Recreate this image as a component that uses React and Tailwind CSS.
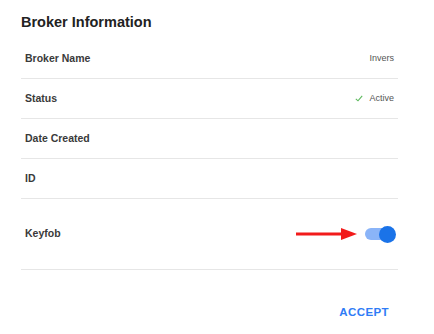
import React from "react";

const rows = [
  { label: "Broker Name", value: "Invers" },
  { label: "Status", value: "Active", check: true },
  { label: "Date Created", value: "" },
  { label: "ID", value: "" },
];

function Toggle() {
  return (
    <div className="relative w-[31px] h-[17px]">
      <div className="absolute left-0 top-[2.5px] w-[28px] h-[12px] rounded-full bg-[#8ab4f8]" />
      <div className="absolute right-0 top-0 w-[17px] h-[17px] rounded-full bg-[#1a73e8]" />
    </div>
  );
}

function Arrow() {
  return (
    <svg width="62" height="14" viewBox="0 0 62 14">
      <line x1="0" y1="7" x2="48" y2="7" stroke="#f21b1b" strokeWidth="3" />
      <polygon points="45,1 61,7 45,13" fill="#f21b1b" />
    </svg>
  );
}

export default function App() {
  return (
    <div
      className="w-[434px] h-[334px] bg-white px-[21px] pt-[12px] overflow-hidden"
      style={{ fontFamily: '"Liberation Sans", Arial, sans-serif' }}
    >
      <h2 className="text-[14.5px] font-bold leading-[20px] text-[#222]">Broker Information</h2>

      <div className="mt-[7px] w-[377px]">
        {rows.map((r) => (
          <div
            key={r.label}
            className="h-[40px] flex items-center justify-between px-[4px] border-b border-[#e6e6e6]"
          >
            <span className="text-[10.5px] font-bold text-[#3a3a3a]">{r.label}</span>
            <span className="flex items-center gap-[6px] text-[9px] text-[#555]">
              {r.check && (
                <svg width="8" height="7" viewBox="0 0 8 7">
                  <path d="M0.8 3.8 L3 5.8 L7.2 0.8" fill="none" stroke="#5cb85c" strokeWidth="1.1" />
                </svg>
              )}
              {r.value}
            </span>
          </div>
        ))}

        <div className="h-[71px] flex items-center justify-between pl-[4px] pr-[2px] border-b border-[#e6e6e6]">
          <span className="text-[10.5px] font-bold text-[#3a3a3a]">Keyfob</span>
          <div className="flex items-center gap-[7px]">
            <Arrow />
            <Toggle />
          </div>
        </div>
      </div>

      <div className="w-[377px] flex justify-end pr-[9px] mt-[35px]">
        <button className="text-[11.5px] font-bold tracking-[0.4px] text-[#2f7cf6] leading-[14px]">
          ACCEPT
        </button>
      </div>
    </div>
  );
}
